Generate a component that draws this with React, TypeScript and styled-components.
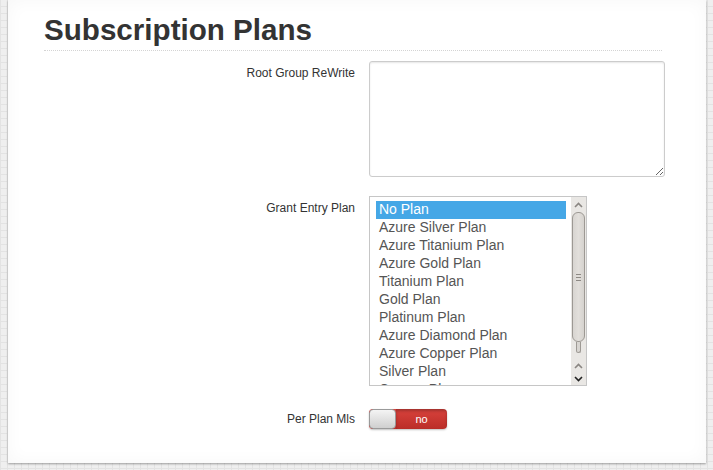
import React from "react";
import styled, { createGlobalStyle } from "styled-components";

const Global = createGlobalStyle`
  html, body { margin: 0; padding: 0; }
  body {
    font-family: "Liberation Sans", Arial, sans-serif;
    background-color: #efefef;
    background-image:
      linear-gradient(90deg, #e3e3e3 1px, transparent 1px),
      linear-gradient(0deg, #e3e3e3 1px, transparent 1px);
    background-size: 7px 7px;
    min-height: 470px;
    overflow: hidden;
  }
`;

const Page = styled.div`
  padding: 0 7px 0 8px;
  height: 470px;
  box-sizing: border-box;
`;

const Panel = styled.div`
  background: #fff;
  box-shadow: 0 1px 2px rgba(0, 0, 0, 0.35), inset 0 0 18px rgba(0, 0, 0, 0.035);
  padding: 12px 44px 34px 36px;
  width: 698px;
  box-sizing: border-box;
`;

const Heading = styled.h1`
  margin: 0;
  font-size: 29.6px;
  line-height: 36px;
  font-weight: bold;
  color: #333;
  padding-bottom: 2px;
  border-bottom: 1px dotted #d4d4d4;
`;

const Form = styled.div`
  display: grid;
  grid-template-columns: 311px 1fr;
  column-gap: 14px;
  margin-top: 10px;
`;

const Label = styled.div<{ $center?: boolean; $mt?: number }>`
  text-align: right;
  font-size: 12px;
  line-height: 18px;
  color: #333;
  margin-top: ${(p) => p.$mt ?? 0}px;
  padding-top: ${(p) => (p.$center ? "0" : "3px")};
  align-self: ${(p) => (p.$center ? "center" : "start")};
`;

const Control = styled.div<{ $mt?: number }>`
  margin-top: ${(p) => p.$mt ?? 0}px;
  display: flex;
`;

const TextArea = styled.textarea`
  width: 296px;
  height: 116px;
  box-sizing: border-box;
  border: 1px solid #ccc;
  border-radius: 3px;
  box-shadow: inset 0 1px 2px rgba(0, 0, 0, 0.1);
  margin: 0;
  padding: 4px 6px;
  font-family: "Liberation Sans", Arial, sans-serif;
  font-size: 13px;
  resize: both;
  outline: none;
`;

const ListBox = styled.div`
  width: 218px;
  height: 190px;
  box-sizing: border-box;
  border: 1px solid #c6c6c6;
  display: flex;
  background: #fff;
`;

const Options = styled.div`
  flex: 1;
  overflow: hidden;
  padding: 4px 5px 0 6px;
`;

const Option = styled.div<{ $selected?: boolean }>`
  height: 18px;
  line-height: 17px;
  font-size: 14px;
  padding-left: 3px;
  white-space: nowrap;
  color: ${(p) => (p.$selected ? "#fff" : "#555")};
  background: ${(p) => (p.$selected ? "#45a7e6" : "transparent")};
`;

const ScrollBar = styled.div`
  width: 15px;
  background: #e9e7e4;
  display: flex;
  flex-direction: column;
  align-items: center;
`;

const Arrow = styled.div<{ $h?: number }>`
  height: ${(p) => p.$h ?? 14}px;
  width: 15px;
  display: flex;
  align-items: center;
  justify-content: center;
  flex-shrink: 0;
`;

const Thumb = styled.div`
  width: 13px;
  height: 130px;
  box-sizing: border-box;
  border: 1px solid #9d9994;
  border-radius: 6px;
  background: linear-gradient(90deg, #d8d5d1, #e2dfdb 50%, #d5d2ce);
  display: flex;
  align-items: center;
  justify-content: center;
  flex-shrink: 0;
`;

const Grip = styled.div`
  width: 5px;
  height: 5px;
  border-top: 1px solid #8d8984;
  border-bottom: 1px solid #8d8984;
  position: relative;
  &::after {
    content: "";
    position: absolute;
    left: 0;
    right: 0;
    top: 2px;
    border-top: 1px solid #8d8984;
  }
`;

const Stub = styled.div`
  width: 5px;
  height: 11px;
  box-sizing: border-box;
  border: 1px solid #9d9994;
  border-top: none;
  border-radius: 0 0 3px 3px;
  background: #d8d5d1;
  flex-shrink: 0;
`;

const Spacer = styled.div`
  flex: 1;
`;

const Toggle = styled.div`
  width: 78px;
  height: 20px;
  border-radius: 4px;
  display: flex;
  overflow: hidden;
  box-shadow: 0 1px 2px rgba(0, 0, 0, 0.25);
  background: linear-gradient(#d8423c, #bb2d28);
`;

const Knob = styled.div`
  width: 27px;
  height: 20px;
  box-sizing: border-box;
  border: 1px solid #9a9a9a;
  border-radius: 4px;
  background: linear-gradient(#f4f4f4, #cfcfcf);
`;

const ToggleText = styled.div`
  flex: 1;
  color: #fff;
  font-size: 11px;
  line-height: 20px;
  text-align: center;
  box-shadow: inset 0 2px 3px rgba(0, 0, 0, 0.25);
`;

const Chevron = ({ down }: { down?: boolean }) => (
  <svg width="9" height="6" viewBox="0 0 9 6">
    <path
      d={down ? "M1 1 L4.5 4.5 L8 1" : "M1 5 L4.5 1.5 L8 5"}
      fill="none"
      stroke={down ? "#222" : "#8a8682"}
      strokeWidth="1.6"
    />
  </svg>
);

const plans = [
  "No Plan",
  "Azure Silver Plan",
  "Azure Titanium Plan",
  "Azure Gold Plan",
  "Titanium Plan",
  "Gold Plan",
  "Platinum Plan",
  "Azure Diamond Plan",
  "Azure Copper Plan",
  "Silver Plan",
  "Copper Plan",
];

export default function App() {
  return (
    <>
      <Global />
      <Page>
        <Panel>
          <Heading>Subscription Plans</Heading>
          <Form>
            <Label>Root Group ReWrite</Label>
            <Control>
              <TextArea />
            </Control>
            <Label $mt={19}>Grant Entry Plan</Label>
            <Control $mt={19}>
              <ListBox role="listbox">
                <Options>
                  {plans.map((p, i) => (
                    <Option key={p} $selected={i === 0}>
                      {p}
                    </Option>
                  ))}
                </Options>
                <ScrollBar>
                  <Arrow $h={15}>
                    <Chevron />
                  </Arrow>
                  <Thumb>
                    <Grip />
                  </Thumb>
                  <Stub />
                  <Spacer />
                  <Arrow>
                    <Chevron />
                  </Arrow>
                  <Arrow $h={12}>
                    <Chevron down />
                  </Arrow>
                </ScrollBar>
              </ListBox>
            </Control>
            <Label $center $mt={23}>Per Plan Mls</Label>
            <Control $mt={23}>
              <Toggle>
                <Knob />
                <ToggleText>no</ToggleText>
              </Toggle>
            </Control>
          </Form>
        </Panel>
      </Page>
    </>
  );
}
